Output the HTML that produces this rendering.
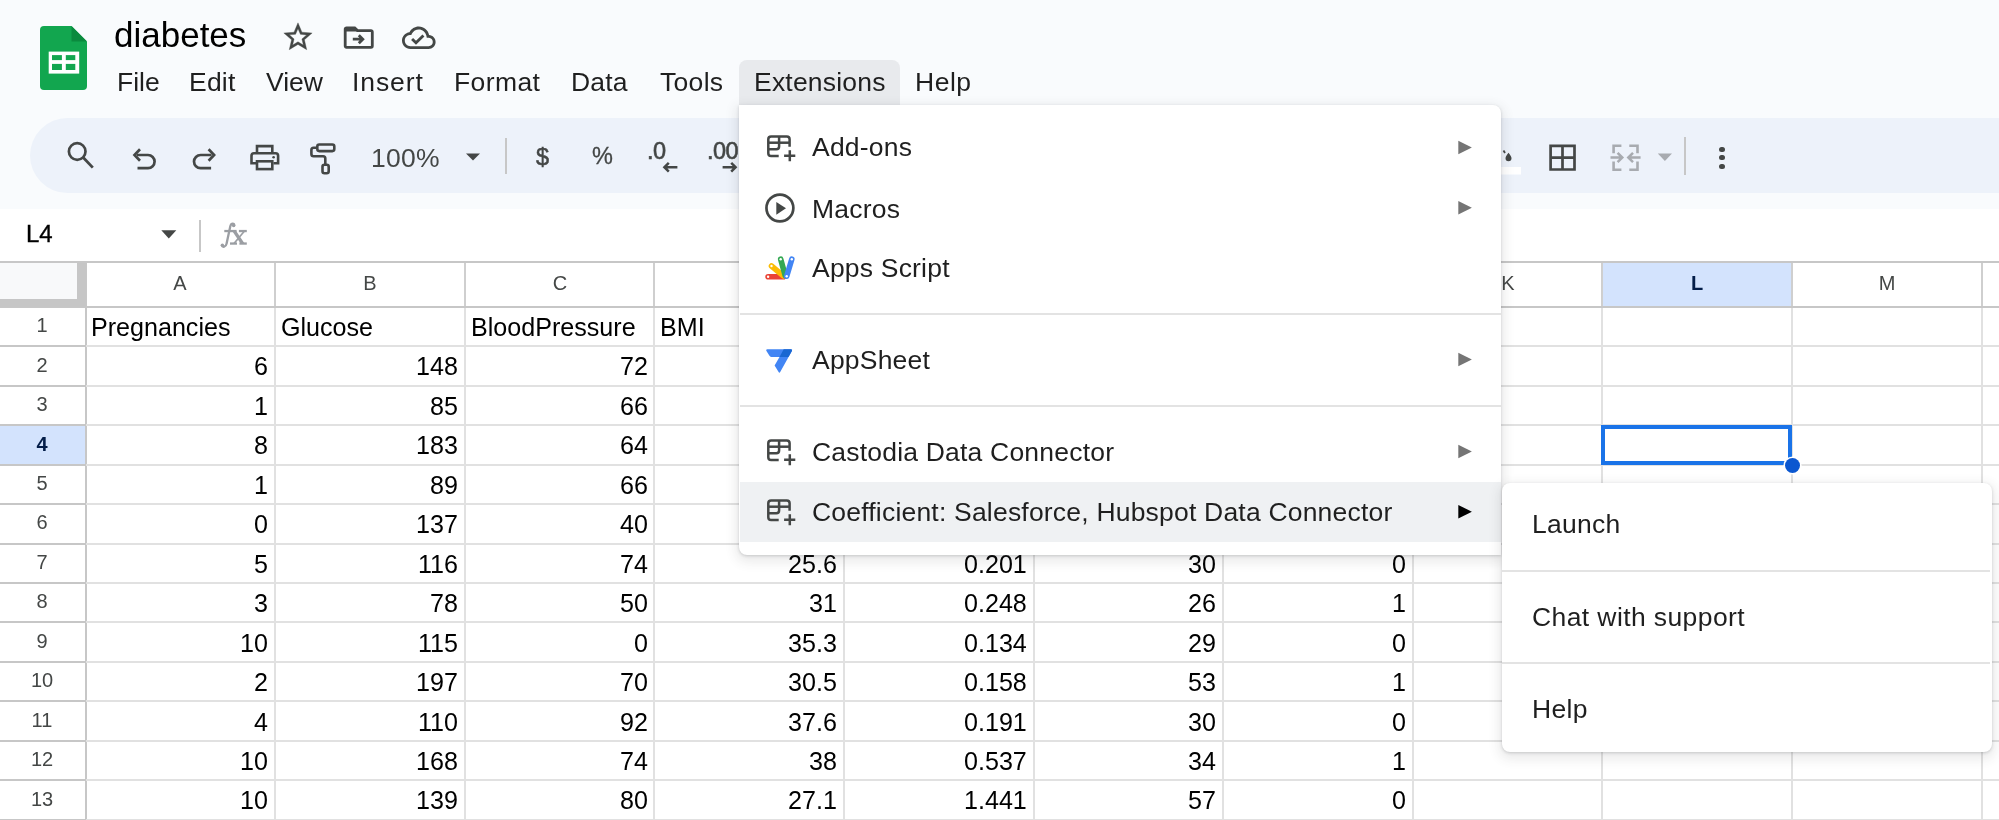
<!DOCTYPE html><html><head><meta charset="utf-8"><style>
html,body{margin:0;padding:0;}
body{width:1999px;height:820px;overflow:hidden;position:relative;background:#f9fbfd;font-family:"Liberation Sans", sans-serif;}
svg{display:block;}
</style></head><body>
<svg style="position:absolute;left:40px;top:26px;" width="47" height="64" viewBox="0 0 47 64">
<path d="M4 0H31.5L47 15.5V60a4 4 0 0 1-4 4H4a4 4 0 0 1-4-4V4a4 4 0 0 1 4-4Z" fill="#12a64f"/>
<path d="M31.5 0L47 15.5H31.5Z" fill="#0b8a3e"/>
<rect x="8.7" y="25.6" width="30.5" height="22" fill="#fff"/>
<rect x="12" y="29.1" width="9.9" height="5" fill="#12a64f"/>
<rect x="25.8" y="29.1" width="9.5" height="5" fill="#12a64f"/>
<rect x="12" y="37.9" width="9.9" height="6.1" fill="#12a64f"/>
<rect x="25.8" y="37.9" width="9.5" height="6.1" fill="#12a64f"/>
</svg>
<div style="position:absolute;left:114px;top:15px;font-size:35px;line-height:39px;color:#000;font-weight:normal;white-space:nowrap;will-change:transform;">diabetes</div>
<svg style="position:absolute;left:281.2px;top:20.3px;" width="34" height="34" viewBox="0 0 34 34"><path transform="scale(1.415)" d="M22 9.24l-7.19-.62L12 2 9.19 8.63 2 9.24l5.46 4.73L5.82 21 12 17.27 18.18 21l-1.63-7.03L22 9.24zM12 15.4l-3.76 2.27 1-4.28-3.32-2.88 4.38-.38L12 6.1l1.71 4.04 4.38.38-3.32 2.88 1 4.28L12 15.4z" fill="#444746" stroke="#444746" stroke-width="0.25"/></svg>
<svg style="position:absolute;left:338px;top:20px;" width="42" height="34" viewBox="338 20 42 34"><path d="M346.5 27.8h8.2l2.8 2.8H371a1.3 1.3 0 0 1 1.3 1.3V46a1.3 1.3 0 0 1-1.3 1.3H346.5a1.3 1.3 0 0 1-1.3-1.3V29.1a1.3 1.3 0 0 1 1.3-1.3Z" fill="none" stroke="#444746" stroke-width="2.8"/>
<path d="M345.2 31.6H358.5L354.7 27.8H346.5Z" fill="#444746"/>
<path d="M352.8 39.2H362.5M358.8 35.2l4 4-4 4" fill="none" stroke="#444746" stroke-width="2.8"/></svg>
<svg style="position:absolute;left:401.7px;top:20.7px;" width="34" height="30" viewBox="0 0 34 30"><path transform="scale(1.4)" d="M19.35 10.04C18.67 6.59 15.64 4 12 4 9.11 4 6.6 5.64 5.35 8.04 2.34 8.36 0 10.91 0 14c0 3.31 2.69 6 6 6h13c2.76 0 5-2.24 5-5 0-2.64-2.05-4.78-4.65-4.96zM19 18H6c-2.21 0-4-1.79-4-4 0-2.05 1.53-3.76 3.56-3.97l1.07-.11.5-.95C8.08 7.14 9.94 6 12 6c2.62 0 4.88 1.86 5.39 4.43l.3 1.5 1.53.11c1.56.1 2.78 1.41 2.78 2.96 0 1.65-1.35 3-3 3zm-9-3.82l-2.09-2.09L6.5 13.5 10 17l6.01-6.01-1.41-1.41z" fill="#444746"/></svg>
<div style="position:absolute;left:739px;top:60px;width:161px;height:45px;background:#e8eaed;border-radius:8px 8px 0 0;"></div>
<div style="position:absolute;left:116.5px;top:67.4px;font-size:26.5px;line-height:30px;color:#1f1f1f;font-weight:normal;white-space:nowrap;will-change:transform;letter-spacing:0px;">File</div>
<div style="position:absolute;left:188.5px;top:67.4px;font-size:26.5px;line-height:30px;color:#1f1f1f;font-weight:normal;white-space:nowrap;will-change:transform;letter-spacing:0.2px;">Edit</div>
<div style="position:absolute;left:265.5px;top:67.4px;font-size:26.5px;line-height:30px;color:#1f1f1f;font-weight:normal;white-space:nowrap;will-change:transform;letter-spacing:0px;">View</div>
<div style="position:absolute;left:351.5px;top:67.4px;font-size:26.5px;line-height:30px;color:#1f1f1f;font-weight:normal;white-space:nowrap;will-change:transform;letter-spacing:0.9px;">Insert</div>
<div style="position:absolute;left:453.5px;top:67.4px;font-size:26.5px;line-height:30px;color:#1f1f1f;font-weight:normal;white-space:nowrap;will-change:transform;letter-spacing:0.4px;">Format</div>
<div style="position:absolute;left:570.5px;top:67.4px;font-size:26.5px;line-height:30px;color:#1f1f1f;font-weight:normal;white-space:nowrap;will-change:transform;letter-spacing:0.2px;">Data</div>
<div style="position:absolute;left:659.5px;top:67.4px;font-size:26.5px;line-height:30px;color:#1f1f1f;font-weight:normal;white-space:nowrap;will-change:transform;letter-spacing:0.3px;">Tools</div>
<div style="position:absolute;left:753.7px;top:67.4px;font-size:26.5px;line-height:30px;color:#1f1f1f;font-weight:normal;white-space:nowrap;will-change:transform;letter-spacing:0.2px;">Extensions</div>
<div style="position:absolute;left:914.5px;top:67.4px;font-size:26.5px;line-height:30px;color:#1f1f1f;font-weight:normal;white-space:nowrap;will-change:transform;letter-spacing:0.5px;">Help</div>
<div style="position:absolute;left:30px;top:118px;width:2100px;height:75px;background:#edf2fa;border-radius:37.5px;"></div>
<svg style="position:absolute;left:60px;top:136px;" width="40" height="40" viewBox="60 136 40 40"><circle cx="77.2" cy="151.5" r="8.3" fill="none" stroke="#444746" stroke-width="2.7"/><path d="M83.2 157.5L92.8 167.6" stroke="#444746" stroke-width="2.8"/></svg>
<svg style="position:absolute;left:126px;top:140px;" width="38" height="36" viewBox="126 140 38 36"><path d="M137 155H148a6.6 6.6 0 0 1 0 13.2H137.5" fill="none" stroke="#444746" stroke-width="2.7"/><path d="M140 149.3L134.5 155l5.5 5.7" fill="none" stroke="#444746" stroke-width="2.7"/></svg>
<svg style="position:absolute;left:186px;top:140px;" width="38" height="36" viewBox="186 140 38 36"><path d="M211.6 155H200.6a6.6 6.6 0 0 0 0 13.2H211.1" fill="none" stroke="#444746" stroke-width="2.7"/><path d="M208.6 149.3L214.1 155l-5.5 5.7" fill="none" stroke="#444746" stroke-width="2.7"/></svg>
<svg style="position:absolute;left:244px;top:138px;" width="42" height="40" viewBox="244 138 42 40"><path d="M257 152.8V146.1H272.3V152.8" fill="none" stroke="#444746" stroke-width="2.6"/>
<path d="M256 163.3H251.5V155.8a2.5 2.5 0 0 1 2.5-2.5H275.6a2.5 2.5 0 0 1 2.5 2.5V163.3H273.5" fill="none" stroke="#444746" stroke-width="2.6"/>
<rect x="257" y="161.3" width="15.3" height="7.8" fill="none" stroke="#444746" stroke-width="2.6"/>
<circle cx="273.6" cy="157.2" r="1.3" fill="#444746"/></svg>
<svg style="position:absolute;left:304px;top:136px;" width="40" height="44" viewBox="304 136 40 44"><rect x="317.3" y="144.5" width="17" height="6.6" rx="2" fill="none" stroke="#444746" stroke-width="2.6"/>
<path d="M317.3 147.8H313.6Q311.4 147.8 311.4 150V154Q311.4 156.2 313.6 156.2H323.1Q325.3 156.2 325.3 158.4V164.8" fill="none" stroke="#444746" stroke-width="2.6"/>
<rect x="322.5" y="164.8" width="6.2" height="8.4" rx="2" fill="none" stroke="#444746" stroke-width="2.6"/></svg>
<div style="position:absolute;left:371px;top:143px;font-size:26.5px;line-height:30px;color:#444746;font-weight:normal;white-space:nowrap;will-change:transform;letter-spacing:0.3px;">100%</div>
<svg style="position:absolute;left:462px;top:150px;" width="22" height="14" viewBox="0 0 22 14"><path d="M4 3.5H18L11 10.5Z" fill="#444746"/></svg>
<div style="position:absolute;left:504.6px;top:137.6px;width:2px;height:36.4px;background:#c7c7c7;"></div>
<div style="position:absolute;left:535.5px;top:144.3px;font-size:23.5px;line-height:26px;color:#444746;font-weight:normal;white-space:nowrap;will-change:transform;-webkit-text-stroke:0.5px #444746;">$</div>
<div style="position:absolute;left:591.5px;top:143.2px;font-size:23.5px;line-height:26px;color:#444746;font-weight:normal;white-space:nowrap;will-change:transform;-webkit-text-stroke:0.3px #444746;">%</div>
<div style="position:absolute;left:646.5px;top:138.4px;font-size:23.5px;line-height:26px;color:#444746;font-weight:normal;white-space:nowrap;will-change:transform;-webkit-text-stroke:0.6px #444746;letter-spacing:-0.6px;">.0</div>
<svg style="position:absolute;left:660px;top:158px;" width="22" height="18" viewBox="660 158 22 18"><path d="M677.4 167.2H664.5M668.8 162.8L664.4 167.2l4.4 4.4" fill="none" stroke="#444746" stroke-width="2.5"/></svg>
<div style="position:absolute;left:706.5px;top:138.4px;font-size:23.5px;line-height:26px;color:#444746;font-weight:normal;white-space:nowrap;will-change:transform;-webkit-text-stroke:0.6px #444746;letter-spacing:-0.6px;">.00</div>
<svg style="position:absolute;left:720px;top:158px;" width="20" height="18" viewBox="720 158 20 18"><path d="M722.6 167.2H735.5M731.2 162.8L735.6 167.2l-4.4 4.4" fill="none" stroke="#444746" stroke-width="2.5"/></svg>
<svg style="position:absolute;left:1495px;top:140px;" width="35" height="40" viewBox="1495 140 35 40"><path d="M1508.5 152.8c-1.6 2.2-3 3.8-3 5.5a3 3 0 0 0 6 0c0-1.7-1.4-3.3-3-5.5Z" fill="#444746"/><path d="M1503.5 150.5l1.5 2.5" stroke="#444746" stroke-width="1.8"/><rect x="1495" y="167" width="26" height="7.5" fill="#fff"/></svg>
<svg style="position:absolute;left:1544px;top:140px;" width="38" height="36" viewBox="1544 140 38 36"><path d="M1550.6 145.8H1574.5V169.5H1550.6Z M1562.5 145.8V169.5 M1550.6 157.6H1574.5" fill="none" stroke="#444746" stroke-width="2.7"/></svg>
<svg style="position:absolute;left:1604px;top:140px;" width="42" height="36" viewBox="1604 140 42 36"><path d="M1621.4 145.8H1613.6V153.3 M1613.6 161.6V169.7H1621.4 M1629.3 145.8H1637.5V153.3 M1637.5 161.6V169.7H1629.3" fill="none" stroke="#a8abb0" stroke-width="2.6"/>
<path d="M1610.5 157.5H1621.5M1617.6 152.8L1622.3 157.5l-4.7 4.7 M1640.6 157.5H1629M1633 152.8L1628.3 157.5l4.7 4.7" fill="none" stroke="#a8abb0" stroke-width="2.5"/></svg>
<svg style="position:absolute;left:1654px;top:150px;" width="22" height="14" viewBox="0 0 22 14"><path d="M3.8 3.5H18L10.9 11Z" fill="#a8abb0"/></svg>
<div style="position:absolute;left:1683.8px;top:137px;width:2px;height:37.5px;background:#c7c7c7;"></div>
<div style="position:absolute;left:1719.4px;top:146.70000000000002px;width:5.2px;height:5.2px;border-radius:50%;background:#444746;"></div>
<div style="position:absolute;left:1719.4px;top:155.1px;width:5.2px;height:5.2px;border-radius:50%;background:#444746;"></div>
<div style="position:absolute;left:1719.4px;top:163.70000000000002px;width:5.2px;height:5.2px;border-radius:50%;background:#444746;"></div>
<div style="position:absolute;left:0px;top:208.5px;width:1999px;height:53px;background:#ffffff;"></div>
<div style="position:absolute;left:26px;top:220.3px;font-size:24px;line-height:27px;color:#000;font-weight:normal;white-space:nowrap;will-change:transform;-webkit-text-stroke:0.35px #000;">L4</div>
<svg style="position:absolute;left:158px;top:226px;" width="22" height="16" viewBox="0 0 22 16"><path d="M3.3 4.3H18.3L10.8 12.5Z" fill="#444746"/></svg>
<div style="position:absolute;left:198.6px;top:219.8px;width:2px;height:32px;background:#c7c7c7;"></div>
<svg style="position:absolute;left:214px;top:218px;" width="38" height="34" viewBox="214 218 38 34"><path d="M234.3 225.6C234.3 223.2 231.3 222.6 230.3 226.2L226.6 243.6C225.9 247.3 222.5 247.6 221.9 245.3" fill="none" stroke="#9b9ea3" stroke-width="2.3" stroke-linecap="round"/>
<circle cx="233.6" cy="225.6" r="1.7" fill="#9b9ea3"/><circle cx="222.4" cy="245.3" r="1.7" fill="#9b9ea3"/>
<rect x="224.3" y="229.9" width="12.3" height="2.3" fill="#9b9ea3"/>
<rect x="238.9" y="229.9" width="7.9" height="2.3" fill="#9b9ea3"/>
<rect x="230" y="242.4" width="7" height="2.3" fill="#9b9ea3"/>
<rect x="239.4" y="242.4" width="7.4" height="2.3" fill="#9b9ea3"/>
<path d="M231.8 230.5H235.8L244.6 243.5H240.6Z" fill="#9b9ea3"/>
<path d="M244.5 231L234 243.5" stroke="#9b9ea3" stroke-width="1.7"/></svg>
<div style="position:absolute;left:0px;top:260.8px;width:1999px;height:2px;background:#c7c7c7;"></div>
<div style="position:absolute;left:0px;top:262.8px;width:1999px;height:44.0px;background:#ffffff;"></div>
<div style="position:absolute;left:0px;top:306.8px;width:1999px;height:513.2px;background:#ffffff;"></div>
<div style="position:absolute;left:1602.3px;top:263px;width:0px;height:0px;background:#fff;"></div>
<div style="position:absolute;left:1603.3px;top:263px;width:187.6px;height:44.80000000000001px;background:#d3e3fd;"></div>
<div style="position:absolute;left:0px;top:426.15000000000003px;width:84.5px;height:37.45px;background:#d3e3fd;"></div>
<div style="position:absolute;left:274.1px;top:306.8px;width:2px;height:513.2px;background:#e1e1e1;"></div>
<div style="position:absolute;left:274.1px;top:262.8px;width:2px;height:44.0px;background:#cfcfcf;"></div>
<div style="position:absolute;left:463.7px;top:306.8px;width:2px;height:513.2px;background:#e1e1e1;"></div>
<div style="position:absolute;left:463.7px;top:262.8px;width:2px;height:44.0px;background:#cfcfcf;"></div>
<div style="position:absolute;left:653.3px;top:306.8px;width:2px;height:513.2px;background:#e1e1e1;"></div>
<div style="position:absolute;left:653.3px;top:262.8px;width:2px;height:44.0px;background:#cfcfcf;"></div>
<div style="position:absolute;left:842.9px;top:306.8px;width:2px;height:513.2px;background:#e1e1e1;"></div>
<div style="position:absolute;left:842.9px;top:262.8px;width:2px;height:44.0px;background:#cfcfcf;"></div>
<div style="position:absolute;left:1032.5px;top:306.8px;width:2px;height:513.2px;background:#e1e1e1;"></div>
<div style="position:absolute;left:1032.5px;top:262.8px;width:2px;height:44.0px;background:#cfcfcf;"></div>
<div style="position:absolute;left:1222.1px;top:306.8px;width:2px;height:513.2px;background:#e1e1e1;"></div>
<div style="position:absolute;left:1222.1px;top:262.8px;width:2px;height:44.0px;background:#cfcfcf;"></div>
<div style="position:absolute;left:1411.7px;top:306.8px;width:2px;height:513.2px;background:#e1e1e1;"></div>
<div style="position:absolute;left:1411.7px;top:262.8px;width:2px;height:44.0px;background:#cfcfcf;"></div>
<div style="position:absolute;left:1601.3px;top:306.8px;width:2px;height:513.2px;background:#e1e1e1;"></div>
<div style="position:absolute;left:1601.3px;top:262.8px;width:2px;height:44.0px;background:#cfcfcf;"></div>
<div style="position:absolute;left:1790.8999999999999px;top:306.8px;width:2px;height:513.2px;background:#e1e1e1;"></div>
<div style="position:absolute;left:1790.8999999999999px;top:262.8px;width:2px;height:44.0px;background:#cfcfcf;"></div>
<div style="position:absolute;left:1980.5px;top:306.8px;width:2px;height:513.2px;background:#e1e1e1;"></div>
<div style="position:absolute;left:1980.5px;top:262.8px;width:2px;height:44.0px;background:#cfcfcf;"></div>
<div style="position:absolute;left:84.5px;top:263px;width:2px;height:557px;background:#c7c7c7;"></div>
<div style="position:absolute;left:0px;top:305.8px;width:1999px;height:2px;background:#c7c7c7;"></div>
<div style="position:absolute;left:85.5px;top:345.25px;width:1999px;height:2px;background:#e1e1e1;"></div>
<div style="position:absolute;left:0px;top:345.25px;width:85.5px;height:2px;background:#c7c7c7;"></div>
<div style="position:absolute;left:85.5px;top:384.70000000000005px;width:1999px;height:2px;background:#e1e1e1;"></div>
<div style="position:absolute;left:0px;top:384.70000000000005px;width:85.5px;height:2px;background:#c7c7c7;"></div>
<div style="position:absolute;left:85.5px;top:424.15000000000003px;width:1999px;height:2px;background:#e1e1e1;"></div>
<div style="position:absolute;left:0px;top:424.15000000000003px;width:85.5px;height:2px;background:#c7c7c7;"></div>
<div style="position:absolute;left:85.5px;top:463.6px;width:1999px;height:2px;background:#e1e1e1;"></div>
<div style="position:absolute;left:0px;top:463.6px;width:85.5px;height:2px;background:#c7c7c7;"></div>
<div style="position:absolute;left:85.5px;top:503.05px;width:1999px;height:2px;background:#e1e1e1;"></div>
<div style="position:absolute;left:0px;top:503.05px;width:85.5px;height:2px;background:#c7c7c7;"></div>
<div style="position:absolute;left:85.5px;top:542.5px;width:1999px;height:2px;background:#e1e1e1;"></div>
<div style="position:absolute;left:0px;top:542.5px;width:85.5px;height:2px;background:#c7c7c7;"></div>
<div style="position:absolute;left:85.5px;top:581.95px;width:1999px;height:2px;background:#e1e1e1;"></div>
<div style="position:absolute;left:0px;top:581.95px;width:85.5px;height:2px;background:#c7c7c7;"></div>
<div style="position:absolute;left:85.5px;top:621.4000000000001px;width:1999px;height:2px;background:#e1e1e1;"></div>
<div style="position:absolute;left:0px;top:621.4000000000001px;width:85.5px;height:2px;background:#c7c7c7;"></div>
<div style="position:absolute;left:85.5px;top:660.85px;width:1999px;height:2px;background:#e1e1e1;"></div>
<div style="position:absolute;left:0px;top:660.85px;width:85.5px;height:2px;background:#c7c7c7;"></div>
<div style="position:absolute;left:85.5px;top:700.3px;width:1999px;height:2px;background:#e1e1e1;"></div>
<div style="position:absolute;left:0px;top:700.3px;width:85.5px;height:2px;background:#c7c7c7;"></div>
<div style="position:absolute;left:85.5px;top:739.75px;width:1999px;height:2px;background:#e1e1e1;"></div>
<div style="position:absolute;left:0px;top:739.75px;width:85.5px;height:2px;background:#c7c7c7;"></div>
<div style="position:absolute;left:85.5px;top:779.2px;width:1999px;height:2px;background:#e1e1e1;"></div>
<div style="position:absolute;left:0px;top:779.2px;width:85.5px;height:2px;background:#c7c7c7;"></div>
<div style="position:absolute;left:85.5px;top:818.6500000000001px;width:1999px;height:2px;background:#e1e1e1;"></div>
<div style="position:absolute;left:0px;top:818.6500000000001px;width:85.5px;height:2px;background:#c7c7c7;"></div>
<div style="position:absolute;left:0px;top:263px;width:77px;height:35.5px;background:#f8f9fa;"></div>
<div style="position:absolute;left:77.2px;top:262.8px;width:8.8px;height:44.0px;background:#c6c6c6;"></div>
<div style="position:absolute;left:0px;top:298.5px;width:86px;height:8px;background:#c6c6c6;"></div>
<div style="position:absolute;left:-119.69999999999999px;width:600px;text-align:center;top:272.4px;font-size:20px;line-height:22px;color:#444746;font-weight:normal;white-space:nowrap;will-change:transform;">A</div>
<div style="position:absolute;left:69.90000000000003px;width:600px;text-align:center;top:272.4px;font-size:20px;line-height:22px;color:#444746;font-weight:normal;white-space:nowrap;will-change:transform;">B</div>
<div style="position:absolute;left:259.5px;width:600px;text-align:center;top:272.4px;font-size:20px;line-height:22px;color:#444746;font-weight:normal;white-space:nowrap;will-change:transform;">C</div>
<div style="position:absolute;left:449.0999999999999px;width:600px;text-align:center;top:272.4px;font-size:20px;line-height:22px;color:#444746;font-weight:normal;white-space:nowrap;will-change:transform;">F</div>
<div style="position:absolute;left:638.6999999999999px;width:600px;text-align:center;top:272.4px;font-size:20px;line-height:22px;color:#444746;font-weight:normal;white-space:nowrap;will-change:transform;">G</div>
<div style="position:absolute;left:828.3px;width:600px;text-align:center;top:272.4px;font-size:20px;line-height:22px;color:#444746;font-weight:normal;white-space:nowrap;will-change:transform;">H</div>
<div style="position:absolute;left:1017.8999999999999px;width:600px;text-align:center;top:272.4px;font-size:20px;line-height:22px;color:#444746;font-weight:normal;white-space:nowrap;will-change:transform;">I</div>
<div style="position:absolute;left:1207.5px;width:600px;text-align:center;top:272.4px;font-size:20px;line-height:22px;color:#444746;font-weight:normal;white-space:nowrap;will-change:transform;">K</div>
<div style="position:absolute;left:1397.1px;width:600px;text-align:center;top:272.4px;font-size:20px;line-height:22px;color:#041e49;font-weight:bold;white-space:nowrap;will-change:transform;">L</div>
<div style="position:absolute;left:1586.6999999999998px;width:600px;text-align:center;top:272.4px;font-size:20px;line-height:22px;color:#444746;font-weight:normal;white-space:nowrap;will-change:transform;">M</div>
<div style="position:absolute;left:-258.1px;width:600px;text-align:center;top:314.225px;font-size:20px;line-height:22px;color:#444746;font-weight:normal;white-space:nowrap;will-change:transform;">1</div>
<div style="position:absolute;left:-258.1px;width:600px;text-align:center;top:353.675px;font-size:20px;line-height:22px;color:#444746;font-weight:normal;white-space:nowrap;will-change:transform;">2</div>
<div style="position:absolute;left:-258.1px;width:600px;text-align:center;top:393.125px;font-size:20px;line-height:22px;color:#444746;font-weight:normal;white-space:nowrap;will-change:transform;">3</div>
<div style="position:absolute;left:-258.1px;width:600px;text-align:center;top:432.575px;font-size:20px;line-height:22px;color:#041e49;font-weight:bold;white-space:nowrap;will-change:transform;">4</div>
<div style="position:absolute;left:-258.1px;width:600px;text-align:center;top:472.02500000000003px;font-size:20px;line-height:22px;color:#444746;font-weight:normal;white-space:nowrap;will-change:transform;">5</div>
<div style="position:absolute;left:-258.1px;width:600px;text-align:center;top:511.47500000000014px;font-size:20px;line-height:22px;color:#444746;font-weight:normal;white-space:nowrap;will-change:transform;">6</div>
<div style="position:absolute;left:-258.1px;width:600px;text-align:center;top:550.9250000000001px;font-size:20px;line-height:22px;color:#444746;font-weight:normal;white-space:nowrap;will-change:transform;">7</div>
<div style="position:absolute;left:-258.1px;width:600px;text-align:center;top:590.375px;font-size:20px;line-height:22px;color:#444746;font-weight:normal;white-space:nowrap;will-change:transform;">8</div>
<div style="position:absolute;left:-258.1px;width:600px;text-align:center;top:629.825px;font-size:20px;line-height:22px;color:#444746;font-weight:normal;white-space:nowrap;will-change:transform;">9</div>
<div style="position:absolute;left:-258.1px;width:600px;text-align:center;top:669.2750000000001px;font-size:20px;line-height:22px;color:#444746;font-weight:normal;white-space:nowrap;will-change:transform;">10</div>
<div style="position:absolute;left:-258.1px;width:600px;text-align:center;top:708.7250000000001px;font-size:20px;line-height:22px;color:#444746;font-weight:normal;white-space:nowrap;will-change:transform;">11</div>
<div style="position:absolute;left:-258.1px;width:600px;text-align:center;top:748.1750000000001px;font-size:20px;line-height:22px;color:#444746;font-weight:normal;white-space:nowrap;will-change:transform;">12</div>
<div style="position:absolute;left:-258.1px;width:600px;text-align:center;top:787.6250000000001px;font-size:20px;line-height:22px;color:#444746;font-weight:normal;white-space:nowrap;will-change:transform;">13</div>
<div style="position:absolute;left:91.3px;top:313.02500000000003px;font-size:25.1px;line-height:28px;color:#000;font-weight:normal;white-space:nowrap;will-change:transform;">Pregnancies</div>
<div style="position:absolute;left:280.90000000000003px;top:313.02500000000003px;font-size:25.1px;line-height:28px;color:#000;font-weight:normal;white-space:nowrap;will-change:transform;">Glucose</div>
<div style="position:absolute;left:470.5px;top:313.02500000000003px;font-size:25.1px;line-height:28px;color:#000;font-weight:normal;white-space:nowrap;will-change:transform;">BloodPressure</div>
<div style="position:absolute;left:660.0999999999999px;top:313.02500000000003px;font-size:25.1px;line-height:28px;color:#000;font-weight:normal;white-space:nowrap;will-change:transform;">BMI</div>
<div style="position:absolute;left:849.6999999999999px;top:313.02500000000003px;font-size:25.1px;line-height:28px;color:#000;font-weight:normal;white-space:nowrap;will-change:transform;">DiabetesPedigreeFunction</div>
<div style="position:absolute;left:1039.3px;top:313.02500000000003px;font-size:25.1px;line-height:28px;color:#000;font-weight:normal;white-space:nowrap;will-change:transform;">Age</div>
<div style="position:absolute;left:1228.8999999999999px;top:313.02500000000003px;font-size:25.1px;line-height:28px;color:#000;font-weight:normal;white-space:nowrap;will-change:transform;">Outcome</div>
<div style="position:absolute;right:1730.6px;top:352.475px;font-size:25.1px;line-height:28px;color:#000;font-weight:normal;white-space:nowrap;will-change:transform;">6</div>
<div style="position:absolute;right:1541.0px;top:352.475px;font-size:25.1px;line-height:28px;color:#000;font-weight:normal;white-space:nowrap;will-change:transform;">148</div>
<div style="position:absolute;right:1351.4px;top:352.475px;font-size:25.1px;line-height:28px;color:#000;font-weight:normal;white-space:nowrap;will-change:transform;">72</div>
<div style="position:absolute;right:1161.8000000000002px;top:352.475px;font-size:25.1px;line-height:28px;color:#000;font-weight:normal;white-space:nowrap;will-change:transform;">33.6</div>
<div style="position:absolute;right:972.2px;top:352.475px;font-size:25.1px;line-height:28px;color:#000;font-weight:normal;white-space:nowrap;will-change:transform;">0.627</div>
<div style="position:absolute;right:782.6000000000001px;top:352.475px;font-size:25.1px;line-height:28px;color:#000;font-weight:normal;white-space:nowrap;will-change:transform;">50</div>
<div style="position:absolute;right:593.0000000000002px;top:352.475px;font-size:25.1px;line-height:28px;color:#000;font-weight:normal;white-space:nowrap;will-change:transform;">1</div>
<div style="position:absolute;right:1730.6px;top:391.925px;font-size:25.1px;line-height:28px;color:#000;font-weight:normal;white-space:nowrap;will-change:transform;">1</div>
<div style="position:absolute;right:1541.0px;top:391.925px;font-size:25.1px;line-height:28px;color:#000;font-weight:normal;white-space:nowrap;will-change:transform;">85</div>
<div style="position:absolute;right:1351.4px;top:391.925px;font-size:25.1px;line-height:28px;color:#000;font-weight:normal;white-space:nowrap;will-change:transform;">66</div>
<div style="position:absolute;right:1161.8000000000002px;top:391.925px;font-size:25.1px;line-height:28px;color:#000;font-weight:normal;white-space:nowrap;will-change:transform;">26.6</div>
<div style="position:absolute;right:972.2px;top:391.925px;font-size:25.1px;line-height:28px;color:#000;font-weight:normal;white-space:nowrap;will-change:transform;">0.351</div>
<div style="position:absolute;right:782.6000000000001px;top:391.925px;font-size:25.1px;line-height:28px;color:#000;font-weight:normal;white-space:nowrap;will-change:transform;">31</div>
<div style="position:absolute;right:593.0000000000002px;top:391.925px;font-size:25.1px;line-height:28px;color:#000;font-weight:normal;white-space:nowrap;will-change:transform;">0</div>
<div style="position:absolute;right:1730.6px;top:431.375px;font-size:25.1px;line-height:28px;color:#000;font-weight:normal;white-space:nowrap;will-change:transform;">8</div>
<div style="position:absolute;right:1541.0px;top:431.375px;font-size:25.1px;line-height:28px;color:#000;font-weight:normal;white-space:nowrap;will-change:transform;">183</div>
<div style="position:absolute;right:1351.4px;top:431.375px;font-size:25.1px;line-height:28px;color:#000;font-weight:normal;white-space:nowrap;will-change:transform;">64</div>
<div style="position:absolute;right:1161.8000000000002px;top:431.375px;font-size:25.1px;line-height:28px;color:#000;font-weight:normal;white-space:nowrap;will-change:transform;">23.3</div>
<div style="position:absolute;right:972.2px;top:431.375px;font-size:25.1px;line-height:28px;color:#000;font-weight:normal;white-space:nowrap;will-change:transform;">0.672</div>
<div style="position:absolute;right:782.6000000000001px;top:431.375px;font-size:25.1px;line-height:28px;color:#000;font-weight:normal;white-space:nowrap;will-change:transform;">32</div>
<div style="position:absolute;right:593.0000000000002px;top:431.375px;font-size:25.1px;line-height:28px;color:#000;font-weight:normal;white-space:nowrap;will-change:transform;">1</div>
<div style="position:absolute;right:1730.6px;top:470.82500000000005px;font-size:25.1px;line-height:28px;color:#000;font-weight:normal;white-space:nowrap;will-change:transform;">1</div>
<div style="position:absolute;right:1541.0px;top:470.82500000000005px;font-size:25.1px;line-height:28px;color:#000;font-weight:normal;white-space:nowrap;will-change:transform;">89</div>
<div style="position:absolute;right:1351.4px;top:470.82500000000005px;font-size:25.1px;line-height:28px;color:#000;font-weight:normal;white-space:nowrap;will-change:transform;">66</div>
<div style="position:absolute;right:1161.8000000000002px;top:470.82500000000005px;font-size:25.1px;line-height:28px;color:#000;font-weight:normal;white-space:nowrap;will-change:transform;">28.1</div>
<div style="position:absolute;right:972.2px;top:470.82500000000005px;font-size:25.1px;line-height:28px;color:#000;font-weight:normal;white-space:nowrap;will-change:transform;">0.167</div>
<div style="position:absolute;right:782.6000000000001px;top:470.82500000000005px;font-size:25.1px;line-height:28px;color:#000;font-weight:normal;white-space:nowrap;will-change:transform;">21</div>
<div style="position:absolute;right:593.0000000000002px;top:470.82500000000005px;font-size:25.1px;line-height:28px;color:#000;font-weight:normal;white-space:nowrap;will-change:transform;">0</div>
<div style="position:absolute;right:1730.6px;top:510.2750000000001px;font-size:25.1px;line-height:28px;color:#000;font-weight:normal;white-space:nowrap;will-change:transform;">0</div>
<div style="position:absolute;right:1541.0px;top:510.2750000000001px;font-size:25.1px;line-height:28px;color:#000;font-weight:normal;white-space:nowrap;will-change:transform;">137</div>
<div style="position:absolute;right:1351.4px;top:510.2750000000001px;font-size:25.1px;line-height:28px;color:#000;font-weight:normal;white-space:nowrap;will-change:transform;">40</div>
<div style="position:absolute;right:1161.8000000000002px;top:510.2750000000001px;font-size:25.1px;line-height:28px;color:#000;font-weight:normal;white-space:nowrap;will-change:transform;">43.1</div>
<div style="position:absolute;right:972.2px;top:510.2750000000001px;font-size:25.1px;line-height:28px;color:#000;font-weight:normal;white-space:nowrap;will-change:transform;">2.288</div>
<div style="position:absolute;right:782.6000000000001px;top:510.2750000000001px;font-size:25.1px;line-height:28px;color:#000;font-weight:normal;white-space:nowrap;will-change:transform;">33</div>
<div style="position:absolute;right:593.0000000000002px;top:510.2750000000001px;font-size:25.1px;line-height:28px;color:#000;font-weight:normal;white-space:nowrap;will-change:transform;">1</div>
<div style="position:absolute;right:1730.6px;top:549.725px;font-size:25.1px;line-height:28px;color:#000;font-weight:normal;white-space:nowrap;will-change:transform;">5</div>
<div style="position:absolute;right:1541.0px;top:549.725px;font-size:25.1px;line-height:28px;color:#000;font-weight:normal;white-space:nowrap;will-change:transform;">116</div>
<div style="position:absolute;right:1351.4px;top:549.725px;font-size:25.1px;line-height:28px;color:#000;font-weight:normal;white-space:nowrap;will-change:transform;">74</div>
<div style="position:absolute;right:1161.8000000000002px;top:549.725px;font-size:25.1px;line-height:28px;color:#000;font-weight:normal;white-space:nowrap;will-change:transform;">25.6</div>
<div style="position:absolute;right:972.2px;top:549.725px;font-size:25.1px;line-height:28px;color:#000;font-weight:normal;white-space:nowrap;will-change:transform;">0.201</div>
<div style="position:absolute;right:782.6000000000001px;top:549.725px;font-size:25.1px;line-height:28px;color:#000;font-weight:normal;white-space:nowrap;will-change:transform;">30</div>
<div style="position:absolute;right:593.0000000000002px;top:549.725px;font-size:25.1px;line-height:28px;color:#000;font-weight:normal;white-space:nowrap;will-change:transform;">0</div>
<div style="position:absolute;right:1730.6px;top:589.175px;font-size:25.1px;line-height:28px;color:#000;font-weight:normal;white-space:nowrap;will-change:transform;">3</div>
<div style="position:absolute;right:1541.0px;top:589.175px;font-size:25.1px;line-height:28px;color:#000;font-weight:normal;white-space:nowrap;will-change:transform;">78</div>
<div style="position:absolute;right:1351.4px;top:589.175px;font-size:25.1px;line-height:28px;color:#000;font-weight:normal;white-space:nowrap;will-change:transform;">50</div>
<div style="position:absolute;right:1161.8000000000002px;top:589.175px;font-size:25.1px;line-height:28px;color:#000;font-weight:normal;white-space:nowrap;will-change:transform;">31</div>
<div style="position:absolute;right:972.2px;top:589.175px;font-size:25.1px;line-height:28px;color:#000;font-weight:normal;white-space:nowrap;will-change:transform;">0.248</div>
<div style="position:absolute;right:782.6000000000001px;top:589.175px;font-size:25.1px;line-height:28px;color:#000;font-weight:normal;white-space:nowrap;will-change:transform;">26</div>
<div style="position:absolute;right:593.0000000000002px;top:589.175px;font-size:25.1px;line-height:28px;color:#000;font-weight:normal;white-space:nowrap;will-change:transform;">1</div>
<div style="position:absolute;right:1730.6px;top:628.625px;font-size:25.1px;line-height:28px;color:#000;font-weight:normal;white-space:nowrap;will-change:transform;">10</div>
<div style="position:absolute;right:1541.0px;top:628.625px;font-size:25.1px;line-height:28px;color:#000;font-weight:normal;white-space:nowrap;will-change:transform;">115</div>
<div style="position:absolute;right:1351.4px;top:628.625px;font-size:25.1px;line-height:28px;color:#000;font-weight:normal;white-space:nowrap;will-change:transform;">0</div>
<div style="position:absolute;right:1161.8000000000002px;top:628.625px;font-size:25.1px;line-height:28px;color:#000;font-weight:normal;white-space:nowrap;will-change:transform;">35.3</div>
<div style="position:absolute;right:972.2px;top:628.625px;font-size:25.1px;line-height:28px;color:#000;font-weight:normal;white-space:nowrap;will-change:transform;">0.134</div>
<div style="position:absolute;right:782.6000000000001px;top:628.625px;font-size:25.1px;line-height:28px;color:#000;font-weight:normal;white-space:nowrap;will-change:transform;">29</div>
<div style="position:absolute;right:593.0000000000002px;top:628.625px;font-size:25.1px;line-height:28px;color:#000;font-weight:normal;white-space:nowrap;will-change:transform;">0</div>
<div style="position:absolute;right:1730.6px;top:668.075px;font-size:25.1px;line-height:28px;color:#000;font-weight:normal;white-space:nowrap;will-change:transform;">2</div>
<div style="position:absolute;right:1541.0px;top:668.075px;font-size:25.1px;line-height:28px;color:#000;font-weight:normal;white-space:nowrap;will-change:transform;">197</div>
<div style="position:absolute;right:1351.4px;top:668.075px;font-size:25.1px;line-height:28px;color:#000;font-weight:normal;white-space:nowrap;will-change:transform;">70</div>
<div style="position:absolute;right:1161.8000000000002px;top:668.075px;font-size:25.1px;line-height:28px;color:#000;font-weight:normal;white-space:nowrap;will-change:transform;">30.5</div>
<div style="position:absolute;right:972.2px;top:668.075px;font-size:25.1px;line-height:28px;color:#000;font-weight:normal;white-space:nowrap;will-change:transform;">0.158</div>
<div style="position:absolute;right:782.6000000000001px;top:668.075px;font-size:25.1px;line-height:28px;color:#000;font-weight:normal;white-space:nowrap;will-change:transform;">53</div>
<div style="position:absolute;right:593.0000000000002px;top:668.075px;font-size:25.1px;line-height:28px;color:#000;font-weight:normal;white-space:nowrap;will-change:transform;">1</div>
<div style="position:absolute;right:1730.6px;top:707.5250000000001px;font-size:25.1px;line-height:28px;color:#000;font-weight:normal;white-space:nowrap;will-change:transform;">4</div>
<div style="position:absolute;right:1541.0px;top:707.5250000000001px;font-size:25.1px;line-height:28px;color:#000;font-weight:normal;white-space:nowrap;will-change:transform;">110</div>
<div style="position:absolute;right:1351.4px;top:707.5250000000001px;font-size:25.1px;line-height:28px;color:#000;font-weight:normal;white-space:nowrap;will-change:transform;">92</div>
<div style="position:absolute;right:1161.8000000000002px;top:707.5250000000001px;font-size:25.1px;line-height:28px;color:#000;font-weight:normal;white-space:nowrap;will-change:transform;">37.6</div>
<div style="position:absolute;right:972.2px;top:707.5250000000001px;font-size:25.1px;line-height:28px;color:#000;font-weight:normal;white-space:nowrap;will-change:transform;">0.191</div>
<div style="position:absolute;right:782.6000000000001px;top:707.5250000000001px;font-size:25.1px;line-height:28px;color:#000;font-weight:normal;white-space:nowrap;will-change:transform;">30</div>
<div style="position:absolute;right:593.0000000000002px;top:707.5250000000001px;font-size:25.1px;line-height:28px;color:#000;font-weight:normal;white-space:nowrap;will-change:transform;">0</div>
<div style="position:absolute;right:1730.6px;top:746.975px;font-size:25.1px;line-height:28px;color:#000;font-weight:normal;white-space:nowrap;will-change:transform;">10</div>
<div style="position:absolute;right:1541.0px;top:746.975px;font-size:25.1px;line-height:28px;color:#000;font-weight:normal;white-space:nowrap;will-change:transform;">168</div>
<div style="position:absolute;right:1351.4px;top:746.975px;font-size:25.1px;line-height:28px;color:#000;font-weight:normal;white-space:nowrap;will-change:transform;">74</div>
<div style="position:absolute;right:1161.8000000000002px;top:746.975px;font-size:25.1px;line-height:28px;color:#000;font-weight:normal;white-space:nowrap;will-change:transform;">38</div>
<div style="position:absolute;right:972.2px;top:746.975px;font-size:25.1px;line-height:28px;color:#000;font-weight:normal;white-space:nowrap;will-change:transform;">0.537</div>
<div style="position:absolute;right:782.6000000000001px;top:746.975px;font-size:25.1px;line-height:28px;color:#000;font-weight:normal;white-space:nowrap;will-change:transform;">34</div>
<div style="position:absolute;right:593.0000000000002px;top:746.975px;font-size:25.1px;line-height:28px;color:#000;font-weight:normal;white-space:nowrap;will-change:transform;">1</div>
<div style="position:absolute;right:1730.6px;top:786.4250000000001px;font-size:25.1px;line-height:28px;color:#000;font-weight:normal;white-space:nowrap;will-change:transform;">10</div>
<div style="position:absolute;right:1541.0px;top:786.4250000000001px;font-size:25.1px;line-height:28px;color:#000;font-weight:normal;white-space:nowrap;will-change:transform;">139</div>
<div style="position:absolute;right:1351.4px;top:786.4250000000001px;font-size:25.1px;line-height:28px;color:#000;font-weight:normal;white-space:nowrap;will-change:transform;">80</div>
<div style="position:absolute;right:1161.8000000000002px;top:786.4250000000001px;font-size:25.1px;line-height:28px;color:#000;font-weight:normal;white-space:nowrap;will-change:transform;">27.1</div>
<div style="position:absolute;right:972.2px;top:786.4250000000001px;font-size:25.1px;line-height:28px;color:#000;font-weight:normal;white-space:nowrap;will-change:transform;">1.441</div>
<div style="position:absolute;right:782.6000000000001px;top:786.4250000000001px;font-size:25.1px;line-height:28px;color:#000;font-weight:normal;white-space:nowrap;will-change:transform;">57</div>
<div style="position:absolute;right:593.0000000000002px;top:786.4250000000001px;font-size:25.1px;line-height:28px;color:#000;font-weight:normal;white-space:nowrap;will-change:transform;">0</div>
<div style="position:absolute;left:1601px;top:424.5px;width:191px;height:40.5px;box-sizing:border-box;border:4px solid #1a73e8;"></div>
<div style="position:absolute;left:1784.8px;top:457.9px;width:15.4px;height:15.4px;border-radius:50%;background:#0b57d0;box-shadow:0 0 0 1.6px #fff;"></div>
<div style="position:absolute;left:739px;top:104.5px;width:762px;height:450px;background:#fff;border-radius:0 8px 0 8px;box-shadow:0 1px 3px 0 rgba(60,64,67,.22),0 4px 12px 3px rgba(60,64,67,.11);z-index:10;"></div>
<div style="position:absolute;left:0;top:0;width:1999px;height:820px;z-index:11;">
<div style="position:absolute;left:740px;top:482.3px;width:761px;height:60.2px;background:#eff1f3;"></div>
<div style="position:absolute;left:740px;top:313px;width:762px;height:2px;background:#e3e3e3;"></div>
<div style="position:absolute;left:740px;top:405px;width:762px;height:2px;background:#e3e3e3;"></div>
<svg style="position:absolute;left:760px;top:130px;" width="40" height="36" viewBox="760 130 40 36"><g transform="translate(0 0)" fill="none" stroke="#444746" stroke-width="2.5">
<path d="M778.7 156H771.1Q768.3 156 768.3 153.2V139.3Q768.3 136.5 771.1 136.5H786.8Q789.6 136.5 789.6 139.3V146.8"/>
<path d="M768.3 142.7H789.6"/>
<path d="M768.3 149.3H776.4Q779.1 149.3 779.1 146.6V136.5"/>
<path d="M789.8 150.2V161.2M784.1 155.8H795.3"/></g></svg>
<svg style="position:absolute;left:760px;top:188px;" width="40" height="40" viewBox="760 188 40 40"><circle cx="779.9" cy="208" r="13.45" fill="none" stroke="#444746" stroke-width="2.7"/><path d="M776.3 201.9V214.8L786 208.3Z" fill="#444746"/></svg>
<svg style="position:absolute;left:760px;top:250px;" width="40" height="35" viewBox="760 250 40 35"><path d="M768.1 276.7H783.5" stroke="#ea4335" stroke-width="5.6" stroke-linecap="round"/>
<path d="M771.5 266L783.3 275.8" stroke="#fbbc04" stroke-width="5.6" stroke-linecap="round"/>
<path d="M780.7 259.2L785.2 275.6" stroke="#34a853" stroke-width="5.6" stroke-linecap="round"/>
<path d="M791.8 259.2L786.7 276.2" stroke="#4285f4" stroke-width="5.6" stroke-linecap="round"/>
<circle cx="768.1" cy="276.7" r="1.2" fill="#fff"/><circle cx="771.5" cy="266" r="1.2" fill="#fff"/><circle cx="780.7" cy="259.2" r="1.2" fill="#fff"/><circle cx="791.8" cy="259.2" r="1.2" fill="#fff"/><circle cx="786.7" cy="276.2" r="1.2" fill="#fff"/></svg>
<svg style="position:absolute;left:760px;top:342px;" width="40" height="36" viewBox="760 342 40 36"><path d="M767.3 349.2H790.9Q792.8 349.2 791.9 350.9L780.2 372.1Q779.4 373.3 778.6 372.1L774.6 365.5L779.5 356.9H771.3Q769.9 356.9 769.3 355.6L766.3 350.8Q765.6 349.2 767.3 349.2Z" fill="#4285f4"/>
<path d="M783.7 349.2H790.9Q792.8 349.2 791.9 350.9L788.5 356.9H779.5Z" fill="#1967d2"/></svg>
<svg style="position:absolute;left:760px;top:434px;" width="40" height="36" viewBox="760 434 40 36"><g transform="translate(0 304)" fill="none" stroke="#444746" stroke-width="2.5">
<path d="M778.7 156H771.1Q768.3 156 768.3 153.2V139.3Q768.3 136.5 771.1 136.5H786.8Q789.6 136.5 789.6 139.3V146.8"/>
<path d="M768.3 142.7H789.6"/>
<path d="M768.3 149.3H776.4Q779.1 149.3 779.1 146.6V136.5"/>
<path d="M789.8 150.2V161.2M784.1 155.8H795.3"/></g></svg>
<svg style="position:absolute;left:760px;top:494.2px;" width="40" height="36.00000000000006" viewBox="760 494.2 40 36.00000000000006"><g transform="translate(0 364.2)" fill="none" stroke="#444746" stroke-width="2.5">
<path d="M778.7 156H771.1Q768.3 156 768.3 153.2V139.3Q768.3 136.5 771.1 136.5H786.8Q789.6 136.5 789.6 139.3V146.8"/>
<path d="M768.3 142.7H789.6"/>
<path d="M768.3 149.3H776.4Q779.1 149.3 779.1 146.6V136.5"/>
<path d="M789.8 150.2V161.2M784.1 155.8H795.3"/></g></svg>
<div style="position:absolute;left:811.5px;top:132.25px;font-size:26.5px;line-height:30px;color:#1f1f1f;font-weight:normal;white-space:nowrap;will-change:transform;letter-spacing:0.2px;">Add-ons</div>
<div style="position:absolute;left:811.5px;top:193.5px;font-size:26.5px;line-height:30px;color:#1f1f1f;font-weight:normal;white-space:nowrap;will-change:transform;letter-spacing:0.2px;">Macros</div>
<div style="position:absolute;left:811.5px;top:253px;font-size:26.5px;line-height:30px;color:#1f1f1f;font-weight:normal;white-space:nowrap;will-change:transform;letter-spacing:0.2px;">Apps Script</div>
<div style="position:absolute;left:811.5px;top:345px;font-size:26.5px;line-height:30px;color:#1f1f1f;font-weight:normal;white-space:nowrap;will-change:transform;letter-spacing:0.2px;">AppSheet</div>
<div style="position:absolute;left:811.5px;top:436.7px;font-size:26.5px;line-height:30px;color:#1f1f1f;font-weight:normal;white-space:nowrap;will-change:transform;letter-spacing:0.2px;">Castodia Data Connector</div>
<div style="position:absolute;left:811.5px;top:497.20000000000005px;font-size:26.5px;line-height:30px;color:#1f1f1f;font-weight:normal;white-space:nowrap;will-change:transform;letter-spacing:0.2px;">Coefficient: Salesforce, Hubspot Data Connector</div>
<svg style="position:absolute;left:1456px;top:139px;" width="18" height="16" viewBox="0 0 18 16"><path d="M2.3 1.75V15.25L15.9 8.5Z" fill="#757575"/></svg>
<svg style="position:absolute;left:1456px;top:199px;" width="18" height="16" viewBox="0 0 18 16"><path d="M2.3 2.0V15.5L15.9 8.75Z" fill="#757575"/></svg>
<svg style="position:absolute;left:1456px;top:351px;" width="18" height="16" viewBox="0 0 18 16"><path d="M2.3 1.8500000000000227V15.350000000000023L15.9 8.600000000000023Z" fill="#757575"/></svg>
<svg style="position:absolute;left:1456px;top:443px;" width="18" height="16" viewBox="0 0 18 16"><path d="M2.3 1.75V15.25L15.9 8.5Z" fill="#757575"/></svg>
<svg style="position:absolute;left:1456px;top:503px;" width="18" height="16" viewBox="0 0 18 16"><path d="M2.3 1.9499999999999886V15.449999999999989L15.9 8.699999999999989Z" fill="#000"/></svg>
</div>
<div style="position:absolute;left:1502px;top:482.5px;width:490px;height:269.5px;background:#fff;border-radius:8px;box-shadow:0 1px 3px 0 rgba(60,64,67,.22),0 4px 12px 3px rgba(60,64,67,.11);z-index:20;"></div>
<div style="position:absolute;left:0;top:0;width:1999px;height:820px;z-index:21;">
<div style="position:absolute;left:1502px;top:570.2px;width:488px;height:2px;background:#e3e3e3;"></div>
<div style="position:absolute;left:1502px;top:661.8px;width:488px;height:2px;background:#e3e3e3;"></div>
<div style="position:absolute;left:1532px;top:509.20000000000005px;font-size:26.5px;line-height:30px;color:#1f1f1f;font-weight:normal;white-space:nowrap;will-change:transform;letter-spacing:0.25px;">Launch</div>
<div style="position:absolute;left:1532px;top:601.9px;font-size:26.5px;line-height:30px;color:#1f1f1f;font-weight:normal;white-space:nowrap;will-change:transform;letter-spacing:0.4px;">Chat with support</div>
<div style="position:absolute;left:1532px;top:693.9px;font-size:26.5px;line-height:30px;color:#1f1f1f;font-weight:normal;white-space:nowrap;will-change:transform;letter-spacing:0.3px;">Help</div>
</div>
</body></html>
